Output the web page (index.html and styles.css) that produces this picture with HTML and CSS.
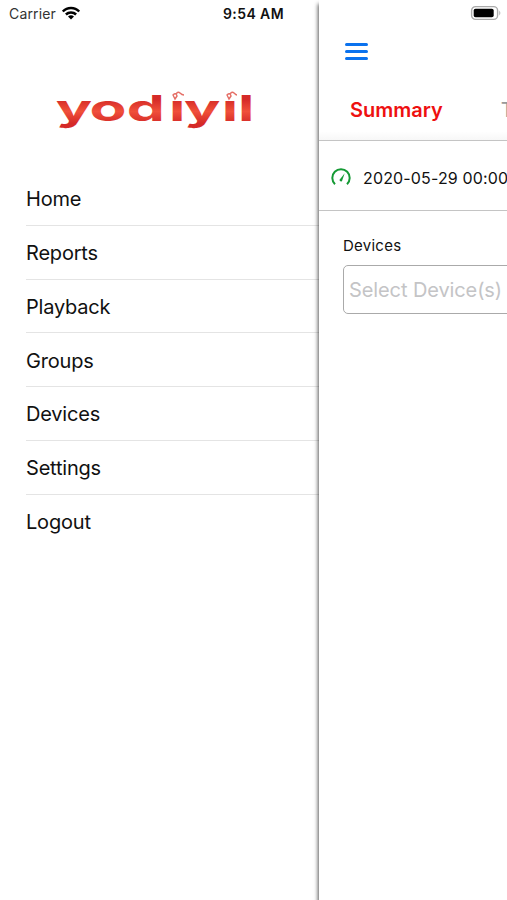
FILE: index.html
```html
<!DOCTYPE html>
<html lang="en">
<head>
<meta charset="utf-8">
<title>yodiyil</title>
<link rel="stylesheet" href="styles.css">
</head>
<body>
<div class="app">
  <aside class="drawer">
    <div class="status">
      <span class="carrier">Carrier</span>
      <svg class="wifi" width="20" height="15" viewBox="0 0 20 15" fill="none" stroke="#000" stroke-width="2.5"><path d="M1.8 5.5C6.3.8 13.7.8 18.2 5.5M4.9 8.5C7.7 5.7 12.3 5.7 15.1 8.5"/><path d="M7 10.5Q10 8 13 10.5L10 13.6Z" fill="#000" stroke="none"/></svg>
      <span class="time">9:54 AM</span>
    </div>
    <svg class="logo" width="200" height="48" viewBox="0 0 200 48">
      <defs>
        <linearGradient id="red" x1="0" y1="0" x2="0" y2="1"><stop offset=".3" stop-color="#d52a28"/><stop offset=".58" stop-color="#f0503a"/><stop offset=".85" stop-color="#d52a28"/></linearGradient>
      </defs>
      <text class="wordmark" transform="scale(1.68 1)" x="1 21.2 43.3 68.4 77.4 99.8 109.5" y="35" fill="url(#red)">yodiyil</text>
      <path class="dot-mask" d="M115 3h17v12h-17zM169 3h15v12h-15z"/>
      <g class="birds"><path d="M119 9q3-3 4 1l-2 3zM122 8q2-3 4-1t4 2"/><path d="M173 9q3-3 4 1l-2 3zM176 8q2-3 4-1t3 2"/></g>
    </svg>
    <nav class="menu">
      <a>Home</a>
      <a>Reports</a>
      <a>Playback</a>
      <a>Groups</a>
      <a>Devices</a>
      <a>Settings</a>
      <a>Logout</a>
    </nav>
  </aside>
  <main class="screen">
    <div class="battery-row">
      <svg width="32" height="16" viewBox="0 0 32 16"><rect x="1.6" y="1.6" width="26" height="12.8" rx="4" fill="#fff" stroke="#aaa" stroke-width="1.4"/><rect x="3.7" y="3.7" width="20" height="8.6" rx="1.8"/><path d="M29.3 5.5q2 2.5 0 5z" fill="#aaa"/></svg>
    </div>
    <div class="toolbar">
      <div class="burger"><i></i><i></i><i></i></div>
    </div>
    <div class="tabs"><span class="tab active">Summary</span><span class="tab">Trips</span></div>
    <div class="range">
      <svg width="22" height="20" viewBox="0 0 22 20" fill="none" stroke="#159a35" stroke-width="2"><path d="M5 17.2A8.7 8.7 0 1 1 17 17.2"/><path d="M9.4 13.1L14.7 6.2L12 13.9Q10.5 15.4 9.4 13.1Z" fill="#159a35" stroke="none"/></svg>
      <span>2020-05-29 00:00</span>
    </div>
    <div class="form">
      <div class="label">Devices</div>
      <div class="field">Select Device(s)</div>
    </div>
  </main>
</div>
</body>
</html>
```
FILE: styles.css
```css
* { box-sizing: border-box; }
body {
  margin: 0;
  background: #fff;
  color: #111;
  font-family: Inter, "Liberation Sans", sans-serif;
  overflow: hidden;
}
.app { display: flex; width: 507px; height: 900px; overflow: hidden; white-space: nowrap; }
.drawer { width: 319px; flex: none; }
.status { display: flex; align-items: center; height: 27px; padding-left: 9px; }
.carrier { width: 52px; font-size: 14px; letter-spacing: .15px; color: #333; }
.wifi { margin-top: -1px; }
.time { margin-left: 142px; font-size: 14px; font-weight: 600; letter-spacing: .4px; }
.logo { display: block; margin: 59px 0 0 54px; }
.wordmark { font-family: Inter, sans-serif; font-size: 36px; font-weight: 700; }
.dot-mask { fill: #fff; }
.birds { fill: none; stroke: #e56f67; stroke-width: 1.4; }
.menu { margin: 38px 0 0 26px; }
.menu a {
  display: flex;
  align-items: center;
  height: 53.75px;
  padding-top: 2px;
  border-bottom: 1px solid #e4e4e4;
  font-size: 20px;
  letter-spacing: -.2px;
}
.menu a:last-child { border-bottom: 0; }
.screen {
  flex: none;
  width: 188px;
  background: #fff;
  box-shadow: -1px 4px 4px rgba(0, 0, 0, .65);
}
.battery-row { height: 28px; padding: 5px 0 0 151px; }
.toolbar { height: 54px; padding: 15px 0 0 26px; }
.burger { display: grid; gap: 4px; width: 23px; }
.burger i { height: 3px; border-radius: 2px; background: #0b72ee; }
.tabs {
  display: flex;
  align-items: center;
  gap: 58px;
  height: 59px;
  padding: 0 0 2px 31px;
  overflow: hidden;
  border-bottom: 1px solid #c4c4c4;
  background: linear-gradient(#fff 85%, #f7f7f7);
  color: #999;
  font-size: 20px;
}
.active { color: #ee1010; font-weight: 600; }
.range {
  display: flex;
  align-items: center;
  gap: 11px;
  height: 70px;
  padding: 4px 0 0 11px;
  border-bottom: 1px solid #c4c4c4;
  font-size: 16px;
  letter-spacing: .15px;
  overflow: hidden;
}
.range svg { flex: none; margin-top: -2px; }
.form { padding: 24px 0 0 24px; overflow: hidden; }
.label { height: 30px; font-size: 15px; line-height: 22px; letter-spacing: .25px; }
.field {
  width: 220px;
  height: 49px;
  padding-left: 5px;
  border: 1px solid #aaa;
  border-radius: 5px;
  color: #c4c4c6;
  font-size: 20px;
  letter-spacing: -.1px;
  line-height: 49px;
}
```
